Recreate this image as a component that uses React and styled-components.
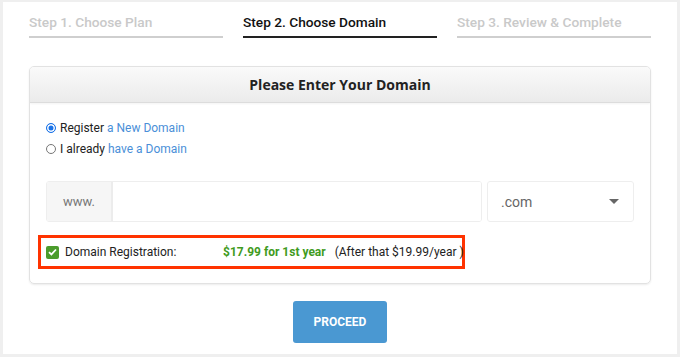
import styled, { createGlobalStyle } from "styled-components";

const GlobalStyle = createGlobalStyle`
  html, body {
    margin: 0;
    padding: 0;
    background: #efefef;
  }
  body {
    font-family: Roboto, "Liberation Sans", Arial, sans-serif;
  }
`;

const Frame = styled.div`
  margin: 2px 3px 0 3px;
  height: 352px;
  background: #ffffff;
  padding: 0 26px;
  box-sizing: border-box;
`;

const Steps = styled.div`
  display: grid;
  grid-template-columns: repeat(3, 1fr);
  column-gap: 20px;
`;

const Step = styled.div`
  padding: 10px 0 4px;
  font-size: 13.7px;
  line-height: 20px;
  font-weight: 500;
  white-space: nowrap;
  color: ${(p) => (p.$active ? "#111" : "#c9c9c9")};
  border-bottom: 2px solid ${(p) => (p.$active ? "#222" : "#cfcfcf")};
`;

const Card = styled.div`
  margin-top: 28px;
  border: 1px solid #e2e2e2;
  border-radius: 5px;
  box-shadow: 0 1px 2px rgba(0, 0, 0, 0.08);
  overflow: hidden;
`;

const CardHeader = styled.div`
  height: 35px;
  display: flex;
  align-items: center;
  justify-content: center;
  background: linear-gradient(#fafafa, #ebebeb);
  border-bottom: 1px solid #dcdcdc;
  box-shadow: 0 1px 2px rgba(0, 0, 0, 0.05);
  font-family: "Open Sans", sans-serif;
  font-weight: 700;
  font-size: 14px;
  color: #222;
`;

const CardBody = styled.div`
  padding: 14px 16px 14px;
`;

const RadioRow = styled.label`
  display: flex;
  align-items: center;
  gap: 4px;
  height: 21px;
  font-size: 12px;
  color: #222;
  white-space: nowrap;
`;

const Radio = styled.span`
  width: 10px;
  height: 10px;
  border-radius: 50%;
  box-sizing: border-box;
  border: 1px solid ${(p) => (p.$checked ? "#1a73e8" : "#767676")};
  background: ${(p) => (p.$checked ? "#1a73e8" : "#fff")};
  box-shadow: ${(p) => (p.$checked ? "inset 0 0 0 1.5px #fff" : "none")};
  flex-shrink: 0;
`;

const Link = styled.a`
  color: #4a8fd8;
  text-decoration: none;
`;

const InputRow = styled.div`
  display: flex;
  gap: 5px;
  margin-top: 22px;
  height: 41px;
`;

const InputGroup = styled.div`
  flex: 1;
  display: flex;
  border: 1px solid #eeeeee;
  border-radius: 3px;
  overflow: hidden;
`;

const Prefix = styled.div`
  width: 64px;
  display: flex;
  align-items: center;
  justify-content: center;
  background: #f6f6f6;
  border-right: 2px solid #ececec;
  font-size: 13px;
  color: #777;
`;

const TextField = styled.input`
  flex: 1;
  border: none;
  outline: none;
  background: #fff;
`;

const Select = styled.div`
  width: 147px;
  box-sizing: border-box;
  display: flex;
  align-items: center;
  justify-content: space-between;
  padding: 0 14px 0 13px;
  border: 1px solid #eeeeee;
  border-radius: 3px;
  font-size: 14px;
  color: #666;
`;

const Caret = styled.span`
  width: 0;
  height: 0;
  border-left: 5px solid transparent;
  border-right: 5px solid transparent;
  border-top: 5px solid #666;
`;

const Highlight = styled.div`
  display: flex;
  align-items: center;
  width: 427px;
  height: 34px;
  box-sizing: border-box;
  margin: 13px 0 0 -8px;
  padding-left: 5px;
  border: 3px solid #ff3300;
  font-size: 12px;
  color: #222;
  white-space: nowrap;
`;

const Check = styled.span`
  width: 13px;
  height: 13px;
  border-radius: 2px;
  background: #4b9c2c;
  display: flex;
  align-items: center;
  justify-content: center;
  margin-right: 6px;
  flex-shrink: 0;
`;

const Label = styled.span`
  width: 158px;
  flex-shrink: 0;
`;

const Price = styled.span`
  color: #3f9b1e;
  font-weight: 700;
  margin-right: 9px;
`;

const Actions = styled.div`
  display: flex;
  justify-content: center;
  margin-top: 17px;
`;

const Button = styled.button`
  width: 94px;
  height: 42px;
  border: none;
  border-radius: 3px;
  background: #4a98d2;
  color: #fff;
  font-family: Roboto, sans-serif;
  font-weight: 700;
  font-size: 12px;
`;

export default function App() {
  return (
    <>
      <GlobalStyle />
      <Frame>
        <Steps>
          <Step>Step 1. Choose Plan</Step>
          <Step $active>Step 2. Choose Domain</Step>
          <Step>Step 3. Review &amp; Complete</Step>
        </Steps>
        <Card>
          <CardHeader>Please Enter Your Domain</CardHeader>
          <CardBody>
            <RadioRow>
              <Radio $checked />
              <span>
                Register <Link href="#">a New Domain</Link>
              </span>
            </RadioRow>
            <RadioRow>
              <Radio />
              <span>
                I already <Link href="#">have a Domain</Link>
              </span>
            </RadioRow>
            <InputRow>
              <InputGroup>
                <Prefix>www.</Prefix>
                <TextField />
              </InputGroup>
              <Select>
                .com
                <Caret />
              </Select>
            </InputRow>
            <Highlight>
              <Check>
                <svg width="9" height="8" viewBox="0 0 9 8">
                  <path d="M1 4.2 L3.4 6.4 L8 1.5" fill="none" stroke="#fff" strokeWidth="1.8" />
                </svg>
              </Check>
              <Label>Domain Registration:</Label>
              <Price>$17.99 for 1st year</Price>
              <span>(After that $19.99/year )</span>
            </Highlight>
          </CardBody>
        </Card>
        <Actions>
          <Button>PROCEED</Button>
        </Actions>
      </Frame>
    </>
  );
}
